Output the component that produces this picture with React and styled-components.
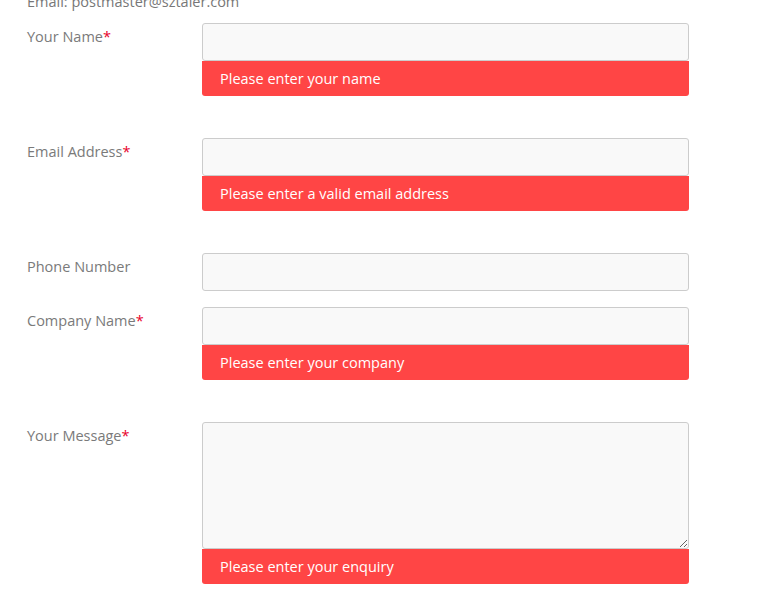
import React from "react";
import styled, { createGlobalStyle } from "styled-components";

const Global = createGlobalStyle`
  html, body { margin: 0; padding: 0; background: #fff; overflow: hidden; }
  body { font-family: "Open Sans", "Liberation Sans", sans-serif; font-size: 14.5px; line-height: 20px; color: #777; }
  * { box-sizing: border-box; }
`;

const Page = styled.div`
  padding: 0 27px;
`;

const Info = styled.p`
  margin: -8px 0 11px;
  color: #777;
`;

const Row = styled.div`
  display: grid;
  grid-template-columns: 175px 487px;
  margin-bottom: 16px;
`;

const Label = styled.label`
  padding-top: 4px;
  color: #7a7a7a;
`;

const Req = styled.span`
  color: #e8002a;
`;

const Field = styled.div`
  display: flex;
  flex-direction: column;
`;

const Input = styled.input`
  display: block;
  width: 100%;
  height: 38px;
  border: 1px solid #cccccc;
  border-radius: 3px;
  background: #f9f9f9;
  font: inherit;
  padding: 6px 12px;
  outline: none;
`;

const TextArea = styled.textarea`
  display: block;
  width: 100%;
  height: 127px;
  border: 1px solid #cccccc;
  border-radius: 3px;
  background: #f9f9f9;
  font: inherit;
  padding: 6px 12px;
  outline: none;
  resize: vertical;
`;

const Error = styled.div`
  height: 35px;
  padding: 8px 18px 7px;
  background: #ff4545;
  color: #fff;
  border-radius: 0 0 3px 3px;
  margin-bottom: 26px;
`;

const fields = [
  { label: "Your Name", req: true, error: "Please enter your name" },
  { label: "Email Address", req: true, error: "Please enter a valid email address" },
  { label: "Phone Number", req: false },
  { label: "Company Name", req: true, error: "Please enter your company" },
  { label: "Your Message", req: true, error: "Please enter your enquiry", area: true },
];

export default function App() {
  return (
    <Page>
      <Global />
      <Info>Email: postmaster@sztaler.com</Info>
      {fields.map((f) => (
        <Row key={f.label}>
          <Label>
            {f.label}
            {f.req && <Req>*</Req>}
          </Label>
          <Field>
            {f.area ? <TextArea /> : <Input type="text" />}
            {f.error && <Error>{f.error}</Error>}
          </Field>
        </Row>
      ))}
    </Page>
  );
}
